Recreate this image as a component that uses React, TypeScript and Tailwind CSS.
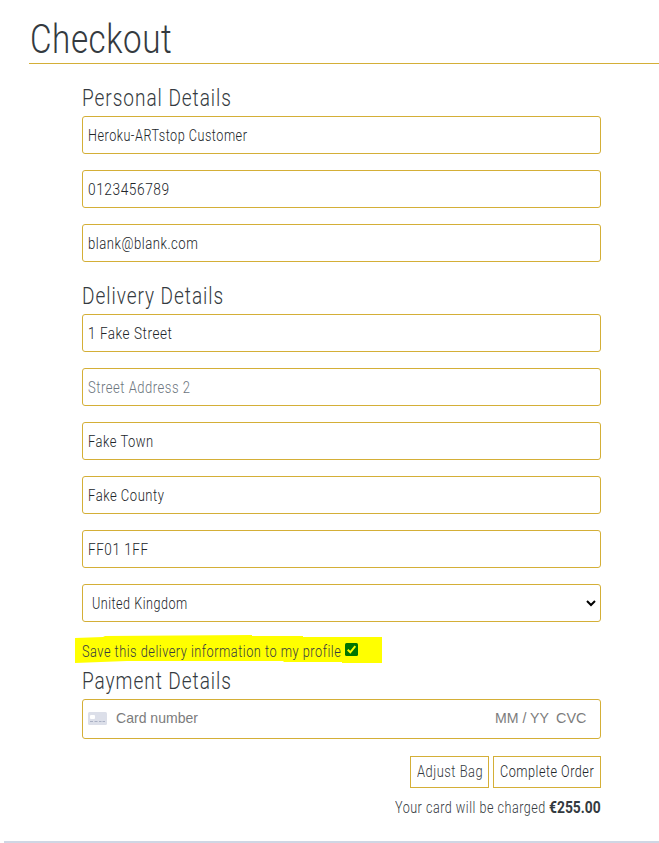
import { useLayoutEffect, useRef, useState } from "react";

/* Condensed text: the glyphs are narrowed so that the line fills the given width. */
function Fit({ text, width, className = "" }: { text: string; width: number; className?: string }) {
  const ref = useRef<HTMLSpanElement>(null);
  const [scale, setScale] = useState(1);
  useLayoutEffect(() => {
    if (ref.current) setScale(width / ref.current.offsetWidth);
  }, [text, width]);
  return (
    <span className={`inline-block shrink-0 whitespace-nowrap ${className}`} style={{ width }}>
      <span ref={ref} className="inline-block origin-left" style={{ transform: `scaleX(${scale})` }}>
        {text}
      </span>
    </span>
  );
}

function Heading({ text, width }: { text: string; width: number }) {
  return (
    <h2 className="flex h-[29px] text-[24px] leading-[31px] tracking-[0.05em] text-[#343a40]">
      <Fit text={text} width={width} />
    </h2>
  );
}

function Field({ text, width, muted = false }: { text: string; width: number; muted?: boolean }) {
  return (
    <div
      className={`flex h-[38px] items-center rounded-[3px] border border-[#d4af37] pt-[2px] pl-[5px] leading-6 ${
        muted ? "text-[#6c757d]" : "text-[#212529]"
      }`}
    >
      <Fit text={text} width={width} />
    </div>
  );
}

export default function App() {
  return (
    <main className="flex h-[843px] w-[659px] flex-col overflow-hidden bg-white pt-[14px] font-['Roboto','Liberation_Sans',sans-serif] text-[16px] font-light tracking-[0.04em] text-[#343a40]">
      <h1 className="ml-[29px] h-[50px] border-b border-[#d4af37] pl-px text-[40px] leading-[51px]">
        <Fit text="Checkout" width={142} />
      </h1>

      <div className="ml-[82px] w-[519px] pt-[19px]">
        <Heading text="Personal Details" width={150} />
        <div className="mt-1 flex flex-col gap-4">
          <Field text="Heroku-ARTstop Customer" width={159.5} />
          <Field text="0123456789" width={81.5} />
          <Field text="blank@blank.com" width={110.5} />
        </div>

        <div className="mt-[19px]">
          <Heading text="Delivery Details" width={142} />
        </div>
        <div className="mt-1 flex flex-col gap-4">
          <Field text="1 Fake Street" width={84.5} />
          <Field text="Street Address 2" width={102.5} muted />
          <Field text="Fake Town" width={65.5} />
          <Field text="Fake County" width={76.5} />
          <Field text="FF01 1FF" width={61} />
          <div className="flex h-[38px] items-center justify-between rounded-[3px] border border-[#d4af37] pr-[4px] pl-[9px] leading-6 text-[#212529]">
            <Fit text="United Kingdom" width={96} className="pt-[2px]" />
            <svg width="10" height="8" viewBox="0 0 10 8" fill="none" stroke="#000" strokeWidth="2">
              <path d="M1 2l4 4 4-4" />
            </svg>
          </div>
        </div>

        <div className="relative mt-[17px] flex h-6 text-[#343a40]">
          <svg className="absolute top-[-5px] left-[-7px]" width="308" height="32" viewBox="0 0 308 32">
            <path
              d="M0 4L28 3L30 2L177 1V2H228V3H307V29H267V28H209L208 27H52L0 29Z"
              fill="#ffff00"
            />
          </svg>
          <div className="relative flex leading-[25px]">
            <Fit text="Save this delivery information to my profile" width={259} />
            <svg className="mt-[4px] ml-[4px]" width="13" height="13" viewBox="0 0 13 13">
              <rect width="13" height="13" rx="1.5" fill="#007500" />
              <path d="M2.7 6.8l2.6 2.500 5-6.100" fill="none" stroke="#ffff00" strokeWidth="2" />
            </svg>
          </div>
        </div>

        <div className="mt-[3px]">
          <Heading text="Payment Details" width={150} />
        </div>
        <div className="mt-1 flex h-[40px] items-center rounded-[3px] border border-[#d4af37] pl-[5px] font-['Liberation_Sans',Arial,sans-serif] text-[14.4px] font-normal tracking-normal text-[#7c7c7c]">
          <svg className="mb-px" width="19" height="13" viewBox="0 0 19 13">
            <rect width="19" height="13" rx="1.5" fill="#dcdfe9" />
            <rect x="2" y="3" width="5" height="4" rx="1" fill="#fff" />
            <path d="M2 9.5h3M6.500 9.500h3M11 9.500h2.500M14.500 9.500h2.500" stroke="#aab1c4" />
          </svg>
          <Fit text="Card number" width={82} className="ml-[9px]" />
          <Fit text="MM / YY" width={54} className="ml-auto" />
          <Fit text="CVC" width={30} className="mr-[14px] ml-[7px]" />
        </div>

        <div className="mt-[17px] flex justify-end gap-1 leading-[30px]">
          <button className="flex h-8 w-[79px] border border-[#d4af37] pl-[6px]">
            <Fit text="Adjust Bag" width={66} />
          </button>
          <button className="flex h-8 w-[108px] border border-[#d4af37] pl-[6px] text-[#212529]">
            <Fit text="Complete Order" width={94} />
          </button>
        </div>
        <p className="mt-2 flex justify-end leading-6">
          <Fit text="Your card will be charged" width={151} />
          <Fit text="€255.00" width={52} className="ml-[3px] font-bold tracking-normal" />
        </p>
      </div>

      <div className="mt-auto ml-1 h-[2px] shrink-0 bg-[#d0d6e4]" />
    </main>
  );
}
